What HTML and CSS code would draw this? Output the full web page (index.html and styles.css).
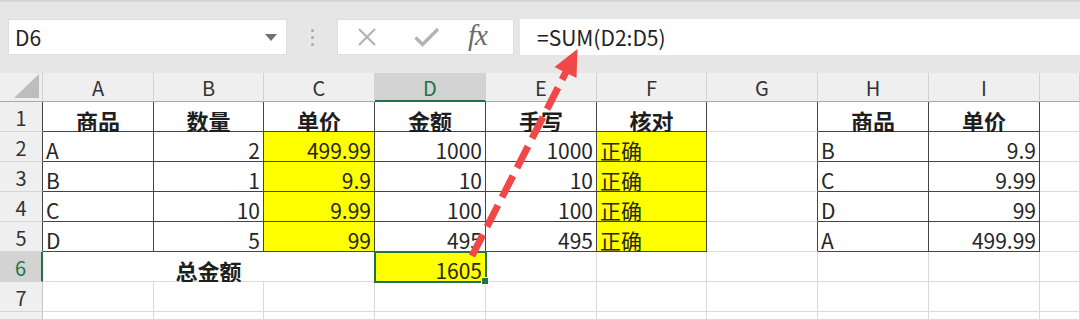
FILE: index.html
```html
<!DOCTYPE html>
<html lang="zh-CN">
<head>
<meta charset="utf-8">
<title>Excel SUM</title>
<link rel="stylesheet" href="styles.css">
</head>
<body>
<div class="app">
  <div class="toolbar">
    <div class="namebox"><span>D6</span><svg class="caret" width="12" height="7" viewBox="0 0 12 7"><polygon points="0,0 12,0 6,7" fill="#727272"/></svg></div>
    <div class="sep"><i></i><i></i><i></i></div>
    <div class="btns">
      <svg class="ico-x" width="18" height="18" viewBox="0 0 18 18"><path d="M1 1 L17 17 M17 1 L1 17" stroke="#b3b3b3" stroke-width="2.2" fill="none"/></svg>
      <svg class="ico-ok" width="26" height="20" viewBox="0 0 26 20"><path d="M1.5 10.5 L8.5 17.5 L24 2" stroke="#b3b3b3" stroke-width="3.4" fill="none"/></svg>
      <span class="fx">fx</span>
    </div>
    <div class="formula">=SUM(D2:D5)</div>
  </div>

  <div class="sheet">
    <div class="corner"><svg width="26" height="24" viewBox="0 0 26 24"><polygon points="25,0 25,24 0,24" fill="#bdbdbd"/></svg></div>
    <div class="h">A</div><div class="h">B</div><div class="h">C</div><div class="h hs">D</div><div class="h">E</div><div class="h">F</div><div class="h">G</div><div class="h">H</div><div class="h">I</div><div class="h"></div>

    <div class="r bd">1</div>
    <div class="c b t">商品</div><div class="c b t">数量</div><div class="c b t">单价</div><div class="c b t">金额</div><div class="c b t">手写</div><div class="c b t">核对</div><div class="c bdr"></div><div class="c b t">商品</div><div class="c b t">单价</div><div class="c"></div>

    <div class="r bd">2</div>
    <div class="c b">A</div><div class="c b n">2</div><div class="c b n y">499.99</div><div class="c b n">1000</div><div class="c b n">1000</div><div class="c b y">正确</div><div class="c bdr"></div><div class="c b">B</div><div class="c b n">9.9</div><div class="c"></div>

    <div class="r bd">3</div>
    <div class="c b">B</div><div class="c b n">1</div><div class="c b n y">9.9</div><div class="c b n">10</div><div class="c b n">10</div><div class="c b y">正确</div><div class="c bdr"></div><div class="c b">C</div><div class="c b n">9.99</div><div class="c"></div>

    <div class="r bd">4</div>
    <div class="c b">C</div><div class="c b n">10</div><div class="c b n y">9.99</div><div class="c b n">100</div><div class="c b n">100</div><div class="c b y">正确</div><div class="c bdr"></div><div class="c b">D</div><div class="c b n">99</div><div class="c"></div>

    <div class="r bd">5</div>
    <div class="c b">D</div><div class="c b n">5</div><div class="c b n y">99</div><div class="c b n">495</div><div class="c b n">495</div><div class="c b y">正确</div><div class="c bdr"></div><div class="c b">A</div><div class="c b n">499.99</div><div class="c"></div>

    <div class="r rs">6</div>
    <div class="c t span3">总金额</div><div class="c n y sel">1605</div><div class="c"></div><div class="c"></div><div class="c"></div><div class="c"></div><div class="c"></div><div class="c"></div>

    <div class="r">7</div>
    <div class="c"></div><div class="c"></div><div class="c"></div><div class="c"></div><div class="c"></div><div class="c"></div><div class="c"></div><div class="c"></div><div class="c"></div><div class="c"></div>

    <div class="r"></div>
    <div class="c"></div><div class="c"></div><div class="c"></div><div class="c"></div><div class="c"></div><div class="c"></div><div class="c"></div><div class="c"></div><div class="c"></div><div class="c"></div>
  </div>

  <svg class="arrow" width="1080" height="320" viewBox="0 0 1080 320">
    <line x1="472" y1="256" x2="566" y2="72" stroke="#f04848" stroke-width="7" stroke-dasharray="24 9"/>
    <polygon points="577.5,49 576.5,78 554.5,67" fill="#f04848"/>
  </svg>
</div>
</body>
</html>
```

FILE: styles.css
```css
html, body {
  margin: 0;
  padding: 0;
}
body {
  background: #e6e6e6;
  font-family: "Noto Sans CJK SC", "Noto Sans", sans-serif;
  color: #262626;
}
.app {
  position: relative;
  width: 1080px;
  height: 320px;
  overflow: hidden;
}

/* ---------- formula bar ---------- */
.toolbar {
  height: 73px;
  box-sizing: border-box;
  border-top: 2px solid #d6d6d6;
  padding: 17px 0 0 8px;
  display: flex;
  align-items: flex-start;
}
.namebox {
  width: 279px;
  height: 36px;
  box-sizing: border-box;
  background: #fff;
  border: 1px solid #dedede;
  display: flex;
  align-items: center;
  justify-content: space-between;
  padding: 0 9px 0 6px;
  font-size: 21px;
  color: #222;
}
.caret {
  display: block;
}
.sep {
  width: 50px;
  height: 36px;
  display: flex;
  flex-direction: column;
  align-items: center;
  justify-content: center;
  gap: 4px;
}
.sep i {
  display: block;
  width: 3px;
  height: 3px;
  border-radius: 50%;
  background: #a8a8a8;
}
.btns {
  width: 177px;
  height: 36px;
  box-sizing: border-box;
  background: #fff;
  border: 1px solid #dedede;
  display: flex;
  align-items: center;
  padding-left: 20px;
}
.ico-x {
  display: block;
}
.ico-ok {
  display: block;
  margin-left: 38px;
}
.fx {
  margin-left: 28px;
  font-family: "Liberation Serif", "DejaVu Serif", serif;
  font-style: italic;
  font-size: 29px;
  line-height: 1;
  color: #6a6a6a;
  letter-spacing: -1px;
  margin-top: -4px;
}
.formula {
  margin-left: 6px;
  flex: 1;
  height: 36px;
  background: #fff;
  display: flex;
  align-items: center;
  padding-left: 17px;
  font-size: 21px;
  color: #222;
}

/* ---------- grid ---------- */
.sheet {
  display: grid;
  grid-template-columns: 43px 111px 110px 111px 111px 111px 110px 111px 111px 111px 1fr;
  grid-template-rows: 29px repeat(7, 30px) 1fr;
  height: 247px;
}
.sheet > div {
  box-sizing: border-box;
  white-space: nowrap;
  line-height: 22px;
}
.corner {
  background: #efefef;
  border-right: 1px solid #cfcfcf;
  border-bottom: 1px solid #a9a9a9;
  display: flex;
  align-items: flex-end;
  justify-content: flex-end;
  padding: 0 2px 3px 0;
}
.corner svg {
  display: block;
}
.h {
  background: #efefef;
  border-right: 1px solid #d2d2d2;
  border-bottom: 1px solid #a9a9a9;
  display: flex;
  align-items: flex-end;
  justify-content: center;
  padding-bottom: 2px;
  font-size: 20px;
  color: #333;
}
.h.hs {
  background: #d3d3d3;
  color: #217346;
  border-bottom: 2px solid #217346;
  padding-bottom: 1px;
}
.r {
  background: #efefef;
  border-right: 1px solid #c6c6c6;
  border-bottom: 1px solid #d6d6d6;
  display: flex;
  align-items: flex-end;
  justify-content: center;
  padding-bottom: 2px;
  font-size: 20px;
  color: #333;
}
.r.bd {
  border-right-color: #444;
}
.r.rs {
  background: #d3d3d3;
  color: #217346;
  border-right: 2px solid #217346;
}
.c {
  background: #fff;
  border-right: 1px solid #dadada;
  border-bottom: 1px solid #dadada;
  display: flex;
  align-items: flex-end;
  justify-content: flex-start;
  padding: 0 3px 0 3px;
  font-size: 21px;
}
.c.b {
  border-right-color: #444;
  border-bottom-color: #444;
}
.c.bdr {
  border-right-color: #444;
}
.c.n {
  justify-content: flex-end;
}
.c.t {
  justify-content: center;
  font-weight: 700;
  font-size: 22px;
  color: #1e1e1e;
}
.c.y {
  background: #ffff00;
}
.span3 {
  grid-column: span 3;
}
.c.sel {
  position: relative;
}
.c.sel::after {
  content: "";
  position: absolute;
  left: -1px;
  top: -1px;
  right: -2px;
  bottom: -2px;
  border: 2px solid #217346;
}
.c.sel::before {
  content: "";
  position: absolute;
  right: -4px;
  bottom: -4px;
  width: 6px;
  height: 6px;
  background: #217346;
  border: 1px solid #fff;
  z-index: 2;
}

/* ---------- annotation ---------- */
.arrow {
  position: absolute;
  left: 0;
  top: 0;
  pointer-events: none;
}
```
